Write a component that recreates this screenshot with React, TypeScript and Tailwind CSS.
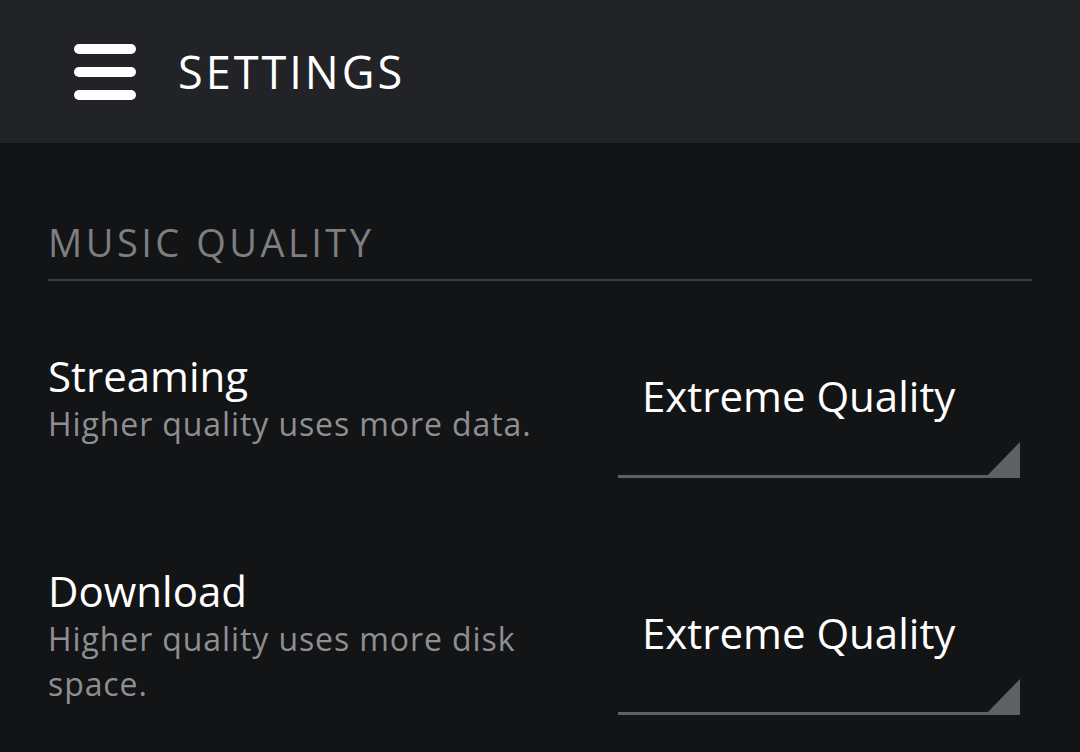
import React from 'react';

function QualitySelect({ value }: { value: string }) {
  return (
    <div className="relative w-[402px] h-[159px] pt-[52px]">
      <div className="pl-[24px] text-[42px] leading-[50px] text-white">{value}</div>
      {/* underline + corner triangle */}
      <div className="absolute bottom-0 left-0 right-0 h-[3px] bg-[#5f6062]" />
      <svg
        className="absolute bottom-0 right-0"
        width="35"
        height="36"
        viewBox="0 0 35 36"
      >
        <polygon points="35,0 35,36 0,36" fill="#5f6062" />
      </svg>
    </div>
  );
}

function SettingRow({
  title,
  description,
  value,
}: {
  title: string;
  description: string;
  value: string;
}) {
  return (
    <div className="flex items-center justify-between pr-[12px]">
      <div className="w-[510px]">
        <p className="text-[42px] leading-[50px] text-white">{title}</p>
        <p className="text-[32px] leading-[45px] tracking-[0.9px] text-[#8f8f91]">{description}</p>
      </div>
      <QualitySelect value={value} />
    </div>
  );
}

export default function App() {
  return (
    <div
      className="w-[1080px] h-[752px] overflow-hidden bg-[#131416]"
      style={{ fontFamily: '"Open Sans", Lato, sans-serif' }}
    >
      {/* Header */}
      <header className="flex h-[143px] items-center bg-[#222327] pl-[74px]">
        <div className="flex w-[62px] flex-col gap-[13px]">
          <span className="h-[10px] rounded-full bg-white" />
          <span className="h-[10px] rounded-full bg-white" />
          <span className="h-[10px] rounded-full bg-white" />
        </div>
        <h1 className="ml-[42px] text-[45px] tracking-[3px] text-white">SETTINGS</h1>
      </header>

      {/* Body */}
      <main className="px-[48px]">
        <div className="pt-[76px]">
          <h2 className="text-[38px] leading-[46px] tracking-[3.5px] text-[#7d7e80]">MUSIC QUALITY</h2>
          <div className="mt-[14px] h-[2px] bg-[#3a3b3d]" />
        </div>

        <div className="mt-[38px] flex flex-col gap-[78px]">
          <SettingRow
            title="Streaming"
            description="Higher quality uses more data."
            value="Extreme Quality"
          />
          <SettingRow
            title="Download"
            description="Higher quality uses more disk space."
            value="Extreme Quality"
          />
        </div>
      </main>
    </div>
  );
}
